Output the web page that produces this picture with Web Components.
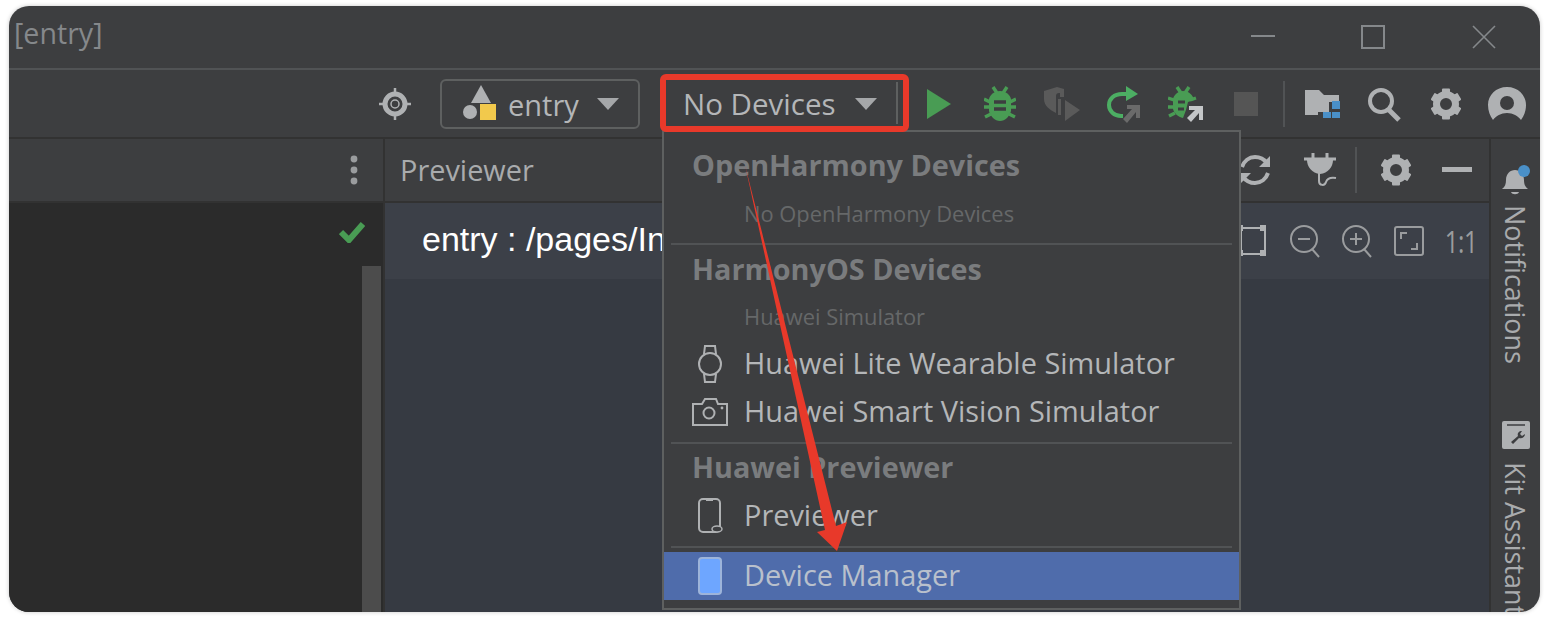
<!DOCTYPE html>
<html lang="en"><head><meta charset="utf-8"><title>entry</title>
<style>
html,body{margin:0;padding:0;background:#fff;width:1546px;height:618px;overflow:hidden}
body{font-family:"Open Sans","Noto Sans",sans-serif}
</style></head><body>
<ide-window>
  <ide-titlebar slot="title">[entry]</ide-titlebar>
  <ide-toolbar slot="toolbar"></ide-toolbar>
  <ide-left slot="left"></ide-left>
  <ide-preview slot="preview"></ide-preview>
  <ide-strip slot="strip"></ide-strip>
  <device-menu slot="overlay"></device-menu>
  <red-mark slot="overlay"></red-mark>
</ide-window>
<script>
const BG='#3d3e40';
const gear=(c='#afb1b3')=>`<svg width="34" height="34" viewBox="0 0 34 34"><g fill="${c}">${[0,60,120,180,240,300].map(a=>`<rect x="13" y="1.5" width="8" height="7" rx="1" transform="rotate(${a} 17 17)"/>`).join('')}</g><circle cx="17" cy="17" r="9.5" fill="none" stroke="${c}" stroke-width="7"/></svg>`;
const ICONS={
 target:`<svg width="36" height="36" viewBox="0 0 36 36"><circle cx="18" cy="18" r="10" fill="none" stroke="#afb1b3" stroke-width="5"/><circle cx="18" cy="18" r="4" fill="none" stroke="#afb1b3" stroke-width="1.5"/><path d="M18 2v6M18 28v6M2 18h6M28 18h6" stroke="#afb1b3" stroke-width="2.5"/></svg>`,
 module:`<svg width="38" height="38" viewBox="0 0 38 38"><path d="M20 0l10 18H10z" fill="#afb1b3"/><circle cx="9" cy="27" r="7" fill="#afb1b3"/><rect x="19" y="19" width="16" height="16" fill="#f2c94c"/></svg>`,
 caret:`<svg width="22" height="14" viewBox="0 0 22 14"><path d="M0 1h22L11 13z" fill="#a5a7a9"/></svg>`,
 play:`<svg width="26" height="32" viewBox="0 0 26 32"><path d="M1 1l24 15L1 31z" fill="#499c54"/></svg>`,
 bug:`<svg width="32" height="36" viewBox="0 0 32 36"><g stroke="#499c54" stroke-width="3.4" fill="none"><path d="M9 1l4 6M23 1l-4 6M0 13l6 3M32 13l-6 3M0 21h6M32 21h-6M1 31l6-3M31 31l-6-3"/></g><path d="M16 5c6 0 10 4 11 8v12c-1 5-6 10-11 10S6 30 5 25V13C6 9 10 5 16 5z" fill="#499c54"/><path d="M10 16h12M10 23h12" stroke="${BG}" stroke-width="3.4"/></svg>`,
 coverage:`<svg width="38" height="36" viewBox="0 0 38 36"><path d="M1 5l13-4 7 2v4h-5c-2 0-3 1-3 3v17c-6-3-12-7-12-14z" fill="#5a5a5a"/><path d="M17 3h4v8h-4zM15 13h3v16h-3z" fill="#5a5a5a"/><path d="M22 14l15 10-15 11z" fill="#5a5a5a"/></svg>`,
 rerun:`<svg width="36" height="38" viewBox="0 0 36 38"><path d="M25 9H17C9 9 4 14 4 20s5 11 12 11h2" fill="none" stroke="#4cae63" stroke-width="4"/><path d="M21 1l12 8-12 7z" fill="#4cae63"/><path d="M22 20h13v13h-4v-6l-9 11-4-4 9-10h-5z" fill="#6a6a6a"/></svg>`,
 attach:`<svg width="36" height="36" viewBox="0 0 36 36"><g stroke="#499c54" stroke-width="3.4"><path d="M9 1l4 6M21 1l-4 6M0 12l6 2M28 12l-6 2M0 21h6M1 30l6-3"/></g><path d="M15 5c6 0 10 4 11 9l-6 2-2 8-3 8c-5-1-9-5-10-9V13c1-4 5-8 10-8z" fill="#499c54"/><path d="M10 16h7M10 23h6" stroke="${BG}" stroke-width="3"/><path d="M21 20h14v14h-4v-7l-8 9-4-4 8-8h-6z" fill="#c4c6c8"/></svg>`,
 stop:`<svg width="24" height="24"><rect width="24" height="24" fill="#555"/></svg>`,
 folder:`<svg width="36" height="30" viewBox="0 0 36 30"><path d="M0 1h14l5 5h15v7H24v10H13v3H0z" fill="#afb1b3"/><path d="M26 13h8v8h-8zM17 24h8v6h-8zM26 24h8v6h-8z" fill="#4a90c8" transform="translate(1 -1)"/></svg>`,
 search:`<svg width="36" height="36" viewBox="0 0 36 36"><circle cx="15" cy="15" r="11" fill="none" stroke="#afb1b3" stroke-width="4"/><path d="M22 23l11 11" stroke="#afb1b3" stroke-width="5"/></svg>`,
 gear:gear(),
 user:`<svg width="40" height="34" viewBox="0 0 40 34"><path d="M20 0C9 0 1 8 1 18c0 6 2 11 5 15 3-4 8-7 14-7s11 3 14 7c3-4 5-9 5-15C39 8 31 0 20 0z" fill="#afb1b3"/><circle cx="20" cy="16" r="7" fill="${BG}"/></svg>`,
 dots:`<svg width="8" height="30" viewBox="0 0 8 30"><circle cx="4" cy="4" r="3.4" fill="#9a9c9e"/><circle cx="4" cy="15" r="3.4" fill="#9a9c9e"/><circle cx="4" cy="26" r="3.4" fill="#9a9c9e"/></svg>`,
 check:`<svg width="26" height="22" viewBox="0 0 26 22"><path d="M2 11l8 8L24 3" fill="none" stroke="#499c54" stroke-width="6"/></svg>`,
 refresh:`<svg width="32" height="32" viewBox="0 0 32 32"><path d="M3 13C5 7 10 3 16 3c5 0 9 2 12 6M29 19c-2 6-7 10-13 10-5 0-9-2-12-6" fill="none" stroke="#afb1b3" stroke-width="4"/><path d="M31 2v11H20zM1 30V19h11z" fill="#afb1b3"/></svg>`,
 plug:`<svg width="36" height="34" viewBox="0 0 36 34"><path d="M2 6h32M11 0v6M25 0v6" stroke="#afb1b3" stroke-width="3"/><path d="M5 7h26c0 7-5 13-13 14C10 20 5 14 5 7z" fill="#afb1b3"/><path d="M17 20v8c0 5 6 5 7 1 1-3 4-5 10-4" fill="none" stroke="#afb1b3" stroke-width="2"/></svg>`,
 minus:`<svg width="30" height="6"><rect width="30" height="5" y="0" fill="#afb1b3"/></svg>`,
 frame:`<svg width="30" height="32" viewBox="0 0 30 32"><path d="M3 3h24v26H3z" fill="none" stroke="#afb1b3" stroke-width="2"/><path d="M22 0h6v6h-6zM22 25h6v6h-6zM0 0h5v6H0zM0 25h5v6H0z" fill="#afb1b3"/></svg>`,
 zoomout:`<svg width="32" height="34" viewBox="0 0 32 34"><circle cx="15" cy="15" r="13" fill="none" stroke="#9a9c9e" stroke-width="2"/><path d="M9 15h12" stroke="#9a9c9e" stroke-width="2"/><path d="M23 25l7 8" stroke="#9a9c9e" stroke-width="2"/></svg>`,
 zoomin:`<svg width="32" height="34" viewBox="0 0 32 34"><circle cx="15" cy="15" r="13" fill="none" stroke="#9a9c9e" stroke-width="2"/><path d="M9 15h12M15 9v12" stroke="#9a9c9e" stroke-width="2"/><path d="M23 25l7 8" stroke="#9a9c9e" stroke-width="2"/></svg>`,
 fit:`<svg width="30" height="30" viewBox="0 0 30 30"><rect x="1" y="1" width="28" height="28" rx="2" fill="none" stroke="#9a9c9e" stroke-width="2"/><path d="M13 7H7v6M17 23h6v-6" fill="none" stroke="#9a9c9e" stroke-width="2"/></svg>`,
 bell:`<svg width="30" height="34" viewBox="0 0 30 34"><path d="M1 24c3-2 4-5 4-9 0-6 4-10 9-10s9 4 9 10c0 4 1 7 4 9z" fill="#afb1b3"/><path d="M10 27h8c-1 3-7 3-8 0z" fill="#afb1b3"/><circle cx="23" cy="6" r="6" fill="#4a90c8"/></svg>`,
 kit:`<svg width="28" height="28" viewBox="0 0 28 28"><rect width="28" height="28" rx="2" fill="#afb1b3"/><path d="M5 4h18" stroke="${BG}" stroke-width="1.5"/><path d="M9 21l7-6c-1-3 1-5 4-5l-2 3 2 2 3-2c0 3-3 5-6 4l-6 6z" fill="${BG}"/></svg>`,
 watch:`<svg width="26" height="38" viewBox="0 0 26 38"><circle cx="13" cy="19" r="11" fill="none" stroke="#afb1b3" stroke-width="2"/><path d="M7 9l1-8h10l1 8M7 29l1 8h10l1-8" fill="none" stroke="#afb1b3" stroke-width="2"/></svg>`,
 camera:`<svg width="38" height="30" viewBox="0 0 38 30"><path d="M2 7h9l3-5h11l2 5h9v21H2z" fill="none" stroke="#afb1b3" stroke-width="2"/><circle cx="18" cy="16" r="5.5" fill="none" stroke="#afb1b3" stroke-width="2"/><circle cx="31" cy="11" r="1.4" fill="#afb1b3"/></svg>`,
 phone:`<svg width="26" height="36" viewBox="0 0 26 36"><rect x="2" y="1" width="21" height="33" rx="4" fill="none" stroke="#afb1b3" stroke-width="2"/><path d="M9 2h7" stroke="#afb1b3" stroke-width="2"/><ellipse cx="20" cy="31" rx="5" ry="3" fill="${BG}" stroke="#afb1b3" stroke-width="1.5"/></svg>`,
 device:`<svg width="26" height="38" viewBox="0 0 26 38"><rect x="2" y="1" width="22" height="36" rx="3" fill="#6ea6ff" stroke="#9db4da" stroke-width="2"/></svg>`
};
function def(name,html){
  customElements.define(name,class extends HTMLElement{
    constructor(){super();const r=this.attachShadow({mode:'open'});r.innerHTML=html;}
  });
}
customElements.define('ide-icon',class extends HTMLElement{
  connectedCallback(){
    if(this.shadowRoot)return;
    const r=this.attachShadow({mode:'open'});
    r.innerHTML=`<style>:host{display:flex;align-items:center;justify-content:center;flex:none}svg{display:block}</style>${ICONS[this.getAttribute('name')]||''}`;
  }
});
def('ide-window',`<style>
:host{display:block;margin:6px 6px 6px 9px;width:1531px;height:606px;position:relative;border-radius:20px;overflow:hidden;background:${BG};box-shadow:0 0 4px rgba(0,0,0,.22)}
.col{display:flex;flex-direction:column;height:100%}
.main{flex:1;display:flex;min-height:0}
</style><div class="col"><slot name="title"></slot><slot name="toolbar"></slot><div class="main"><slot name="left"></slot><slot name="preview"></slot><slot name="strip"></slot></div></div><slot name="overlay"></slot>`);
def('ide-titlebar',`<style>
:host{display:flex;align-items:center;height:62px;box-sizing:content-box;border-bottom:2px solid #515355;color:#85888b;font:28.6px/1 "Open Sans",sans-serif;padding-left:5px;flex:none}
.s{flex:1;padding-bottom:8px}
.w{display:flex;align-items:center;justify-content:center;width:110.5px;height:50px}
svg{display:block}
.r{display:flex;padding-right:1px}
</style><div class="s"><slot></slot></div><div class="r">
<div class="w"><svg width="24" height="4"><rect width="24" height="2" y="0" fill="#85888b"/></svg></div>
<div class="w"><svg width="24" height="24"><rect x="1" y="1" width="22" height="22" fill="none" stroke="#85888b" stroke-width="2"/></svg></div>
<div class="w"><svg width="24" height="24"><path d="M1 1l22 22M23 1L1 23" stroke="#85888b" stroke-width="1.6"/></svg></div></div>`);
def('ide-toolbar',`<style>
:host{display:flex;align-items:center;height:67px;flex:none;border-bottom:2px solid #323232;padding-left:367px;box-sizing:content-box;color:#b4b6b8;font:29.5px/1 "Open Sans",sans-serif}
.b{display:flex;align-items:center;justify-content:center;width:61.5px;height:48px;flex:none}
.t{width:38px;margin-right:26px}
.entry{display:flex;align-items:center;width:200px;height:50px;box-sizing:border-box;border:2px solid #5e6060;border-radius:6px;padding:0 19px 0 19px;margin-right:20px;flex:none;font-size:29px}
.entry span{flex:1;margin-left:9px;padding-top:1px}
.dev{display:flex;align-items:center;width:248px;height:50px;box-sizing:border-box;padding-left:23px;flex:none}
.dev span{margin-right:19px;padding-top:1px}
.sep{width:2px;height:46px;background:#515355;flex:none;margin:0 7px 0 6px}
</style>
<div class="b t"><ide-icon name="target"></ide-icon></div>
<div class="entry"><ide-icon name="module"></ide-icon><span>entry</span><ide-icon name="caret"></ide-icon></div>
<div class="dev"><span>No Devices</span><ide-icon name="caret"></ide-icon></div>
<div class="b"><ide-icon name="play"></ide-icon></div>
<div class="b"><ide-icon name="bug"></ide-icon></div>
<div class="b"><ide-icon name="coverage"></ide-icon></div>
<div class="b"><ide-icon name="rerun"></ide-icon></div>
<div class="b"><ide-icon name="attach" style="margin-left:3px"></ide-icon></div>
<div class="b"><ide-icon name="stop"></ide-icon></div>
<div class="sep"></div>
<div class="b"><ide-icon name="folder"></ide-icon></div>
<div class="b"><ide-icon name="search"></ide-icon></div>
<div class="b"><ide-icon name="gear"></ide-icon></div>
<div class="b"><ide-icon name="user"></ide-icon></div>`);
def('ide-left',`<style>
:host{display:flex;flex-direction:column;width:374px;flex:none;border-right:2px solid #323232}
.h{height:62px;display:flex;align-items:center;justify-content:flex-end;padding-right:25px;flex:none;border-bottom:2px solid #323232}
.b{flex:1;background:#2b2b2b;display:flex;justify-content:flex-end}
.m{display:flex;flex-direction:column;align-items:flex-end;width:60px}
.c{padding:18px 18px 0 0;height:28px;margin-bottom:17px}
.sb{width:19px;flex:1;background:#4c4c4c;margin-right:2px}
</style><div class="h"><ide-icon name="dots"></ide-icon></div><div class="b"><div class="m"><div class="c"><ide-icon name="check"></ide-icon></div><div class="sb"></div></div></div>`);
def('ide-preview',`<style>
:host{display:flex;flex-direction:column;flex:1;min-width:0;background:#363a42}
.h{height:62px;flex:none;background:${BG};border-bottom:2px solid #323232;display:flex;align-items:center;padding-left:15px;color:#a9abad;font:28.9px/1 "Open Sans",sans-serif}
.h span{flex:1}
.i{display:flex;align-items:center;justify-content:center;width:65px}
.sep{width:2px;height:46px;background:#515355}
.sub{height:76px;flex:none;background:#3c4048;display:flex;align-items:center;padding-left:37px;color:#fff;font:34px/1 "Liberation Sans",Arial,sans-serif}
.sub span{flex:1;padding-bottom:4px}
.z{display:flex;align-items:center;justify-content:center;width:52px}
.one{color:#9a9c9e;font:31px/1 "Open Sans",sans-serif}
.one b{font-weight:400;display:block;transform:scaleX(.78);letter-spacing:-.5px}
</style><div class="h"><span>Previewer</span>
<div class="i"><ide-icon name="refresh"></ide-icon></div><div class="i" style="margin-right:1px"><ide-icon name="plug"></ide-icon></div><div class="sep" style="margin:0 3px 0 2px"></div>
<div class="i" style="width:72px"><ide-icon name="gear"></ide-icon></div><div class="i" style="width:50px;margin-right:7px"><ide-icon name="minus"></ide-icon></div></div>
<div class="sub"><span>entry : /pages/Index</span>
<div class="z"><ide-icon name="frame"></ide-icon></div><div class="z"><ide-icon name="zoomout"></ide-icon></div><div class="z"><ide-icon name="zoomin"></ide-icon></div><div class="z"><ide-icon name="fit"></ide-icon></div><div class="z one" style="margin-right:2px"><b>1:1</b></div></div>`);
def('ide-strip',`<style>
:host{display:flex;flex-direction:column;align-items:center;width:49px;flex:none;border-left:2px solid #323232;color:#a9abad;font:27px/1 "Open Sans",sans-serif;padding-top:26px;box-sizing:content-box;overflow:hidden}
.v{writing-mode:vertical-rl;white-space:nowrap}
</style><ide-icon name="bell"></ide-icon><div class="v" style="margin-top:6px">Notifications</div>
<ide-icon name="kit" style="margin-top:57px"></ide-icon><div class="v" style="margin-top:13px">Kit Assistant</div>`);
customElements.define('menu-row',class extends HTMLElement{
  connectedCallback(){
    if(this.shadowRoot)return;
    const r=this.attachShadow({mode:'open'});
    const ic=this.getAttribute('icon');
    r.innerHTML=`<style>
:host{display:flex;align-items:center;height:48px;color:#b4b6b8;font:28.9px/1 "Open Sans",sans-serif;white-space:nowrap;padding-left:27px}
:host([head]){font-weight:700;font-size:28.8px;color:#7a7c7e;padding-left:28px;height:54px}
:host([off]){color:#666869;font-size:21.9px;height:44px;padding-left:80px}
:host([sel]){background:#4f6cab;color:#b9c0cc}
:host([head]) .s{padding-bottom:0}
:host([off]) .s{padding-bottom:0}
.i{width:56px;height:40px;display:flex;align-items:center;justify-content:center;margin:0 6px 0 -9px;flex:none}
.s{padding-bottom:1px}
</style>${ic?`<div class="i"><ide-icon name="${ic}"></ide-icon></div>`:''}<span class="s"><slot></slot></span>`;
  }
});
def('device-menu',`<style>
:host{position:absolute;left:653px;top:124px;width:579px;height:480px;box-sizing:border-box;background:${BG};border:2px solid #5e6060;display:block}
.sep{height:2px;background:#515355;margin:0 7px}
.top{height:6px}
</style><div class="top"></div>
<menu-row head>OpenHarmony Devices</menu-row><menu-row off>No OpenHarmony Devices</menu-row>
<div class="sep" style="margin-top:7px"></div>
<menu-row head style="height:48px">HarmonyOS Devices</menu-row><menu-row off style="height:48px">Huawei Simulator</menu-row>
<menu-row icon="watch" style="height:46px">Huawei Lite Wearable Simulator</menu-row><menu-row icon="camera" style="height:50px">Huawei Smart Vision Simulator</menu-row>
<div class="sep" style="margin-top:5px"></div>
<menu-row head style="height:46px">Huawei Previewer</menu-row><menu-row icon="phone" style="height:52px">Previewer</menu-row>
<div class="sep" style="margin-top:4px;margin-bottom:4px"></div>
<menu-row icon="device" sel>Device Manager</menu-row>`);
def('red-mark',`<style>
:host{position:absolute;left:0;top:0;width:1531px;height:606px;display:block;pointer-events:none}
.box{position:absolute;left:651px;top:68px;width:249px;height:58px;box-sizing:border-box;border:6px solid #e8392a;border-radius:6px}
.ln{position:absolute;right:5px;top:2px;bottom:2px;width:2px;background:#5e6060}
svg{position:absolute;left:0;top:0}
</style><div class="box"><div class="ln"></div></div>
<svg width="1531" height="606" viewBox="9 6 1531 606"><path d="M745 165L836 526 847 522 837 551 817 532 825 530z" fill="#e8392a"/></svg>`);
</script>
</body></html>
